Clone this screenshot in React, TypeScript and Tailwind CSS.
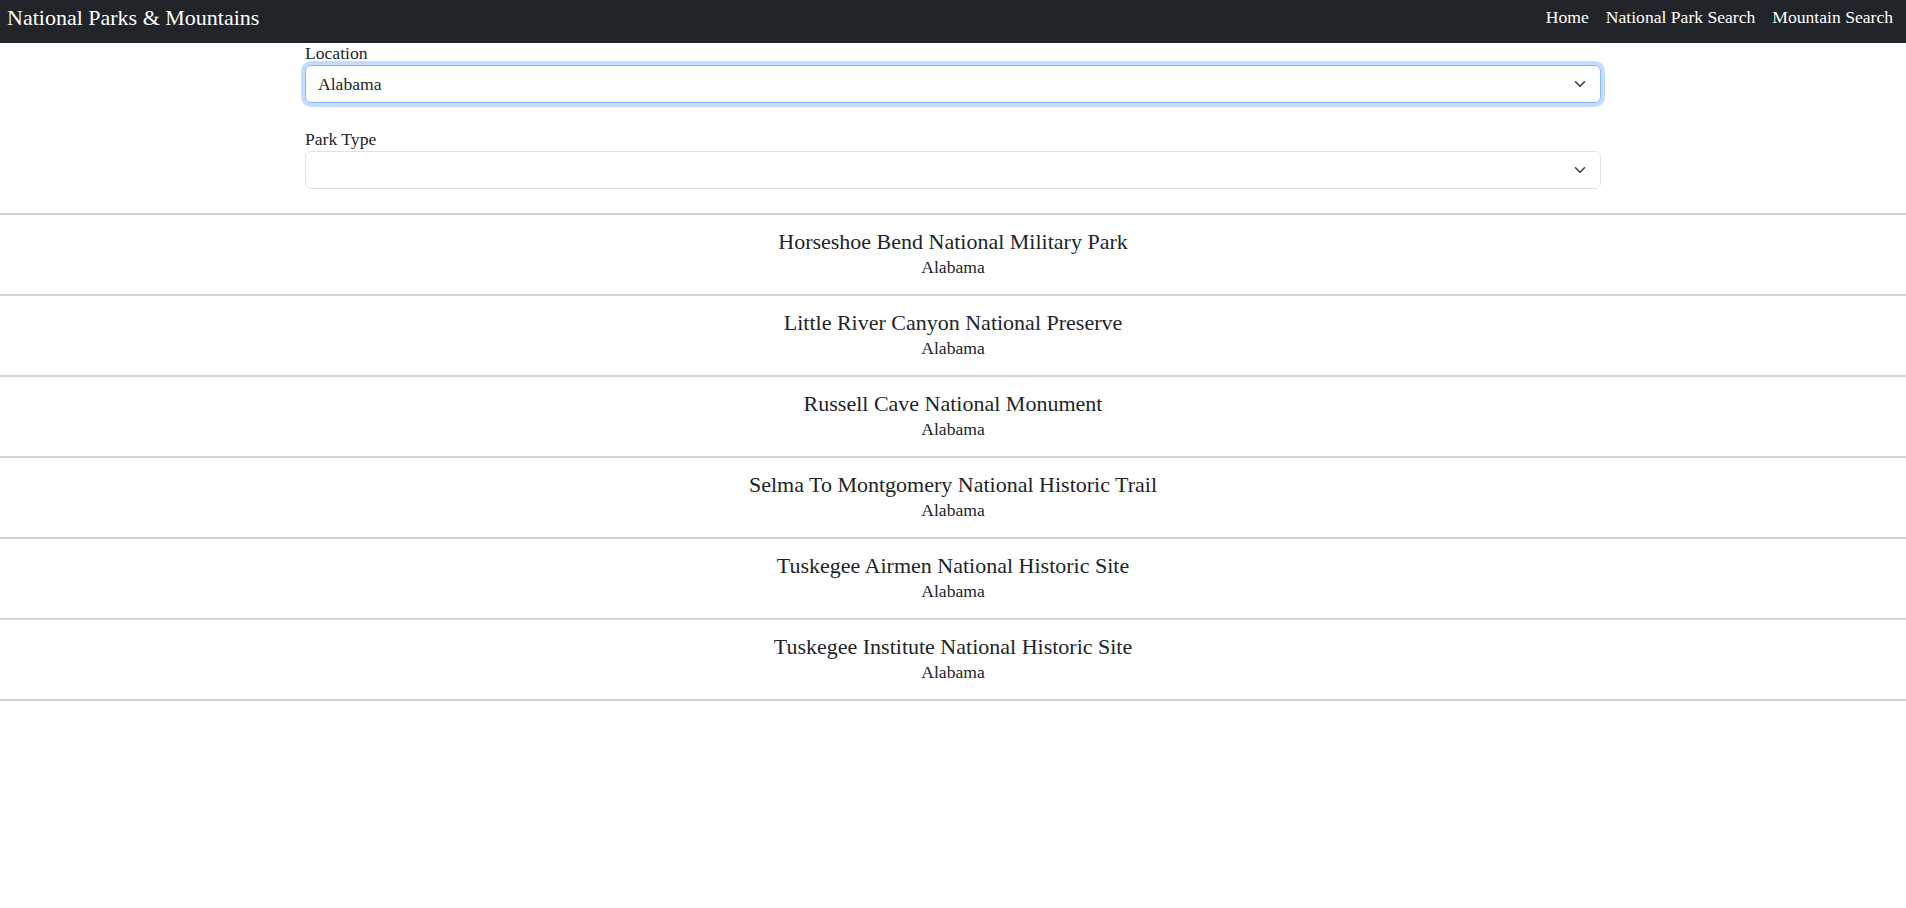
import React from 'react'

const parks = [
  'Horseshoe Bend National Military Park',
  'Little River Canyon National Preserve',
  'Russell Cave National Monument',
  'Selma To Montgomery National Historic Trail',
  'Tuskegee Airmen National Historic Site',
  'Tuskegee Institute National Historic Site',
]

const Chevron = () => (
  <svg
    width="16"
    height="12"
    viewBox="0 0 16 16"
    className="absolute right-[12px] top-1/2 -translate-y-1/2 pointer-events-none"
  >
    <path d="m2 5 6 6 6-6" fill="none" stroke="#343a40" strokeWidth="2" strokeLinecap="round" strokeLinejoin="round" />
  </svg>
)

const App: React.FC = () => {
  return (
    <div className="min-h-screen bg-white text-[#212529] font-['Liberation_Serif',serif]">
      <nav className="h-[43px] bg-[#212529] flex items-start justify-between pl-[7px] pr-[13px]">
        <a className="pt-[6px] text-[22px] leading-[24px] text-white">National Parks &amp; Mountains</a>
        <div className="pt-[5px] flex gap-[17px] text-[17.6px] leading-[24px] text-white">
          <a>Home</a>
          <a>National Park Search</a>
          <a>Mountain Search</a>
        </div>
      </nav>

      <div className="w-[1296px] mx-auto">
        <label className="block h-[20px] leading-[20px] text-[17.6px] mb-[2px]">Location</label>
        <div className="relative h-[38px] rounded-[6px] border border-[#86b7fe] shadow-[0_0_0_4px_rgba(13,110,253,0.25)] flex items-center pl-[12px]">
          <span className="text-[17.6px] leading-[24px]">Alabama</span>
          <Chevron />
        </div>

        <label className="block mt-[26px] h-[20px] leading-[20px] text-[17.6px] mb-[2px]">Park Type</label>
        <div className="relative h-[38px] rounded-[6px] border border-[#dee2e6] flex items-center pl-[12px]">
          <Chevron />
        </div>
      </div>

      <ul className="mt-[24px] border-b-2 border-[#d3d3d3]">
        {parks.map(p => (
          <li key={p} className="border-t-2 border-[#d3d3d3] h-[81px] pt-[14px] text-center">
            <div className="text-[22px] leading-[26px]">{p}</div>
            <div className="text-[17.6px] leading-[24px]">Alabama</div>
          </li>
        ))}
      </ul>
    </div>
  )
}

export default App
